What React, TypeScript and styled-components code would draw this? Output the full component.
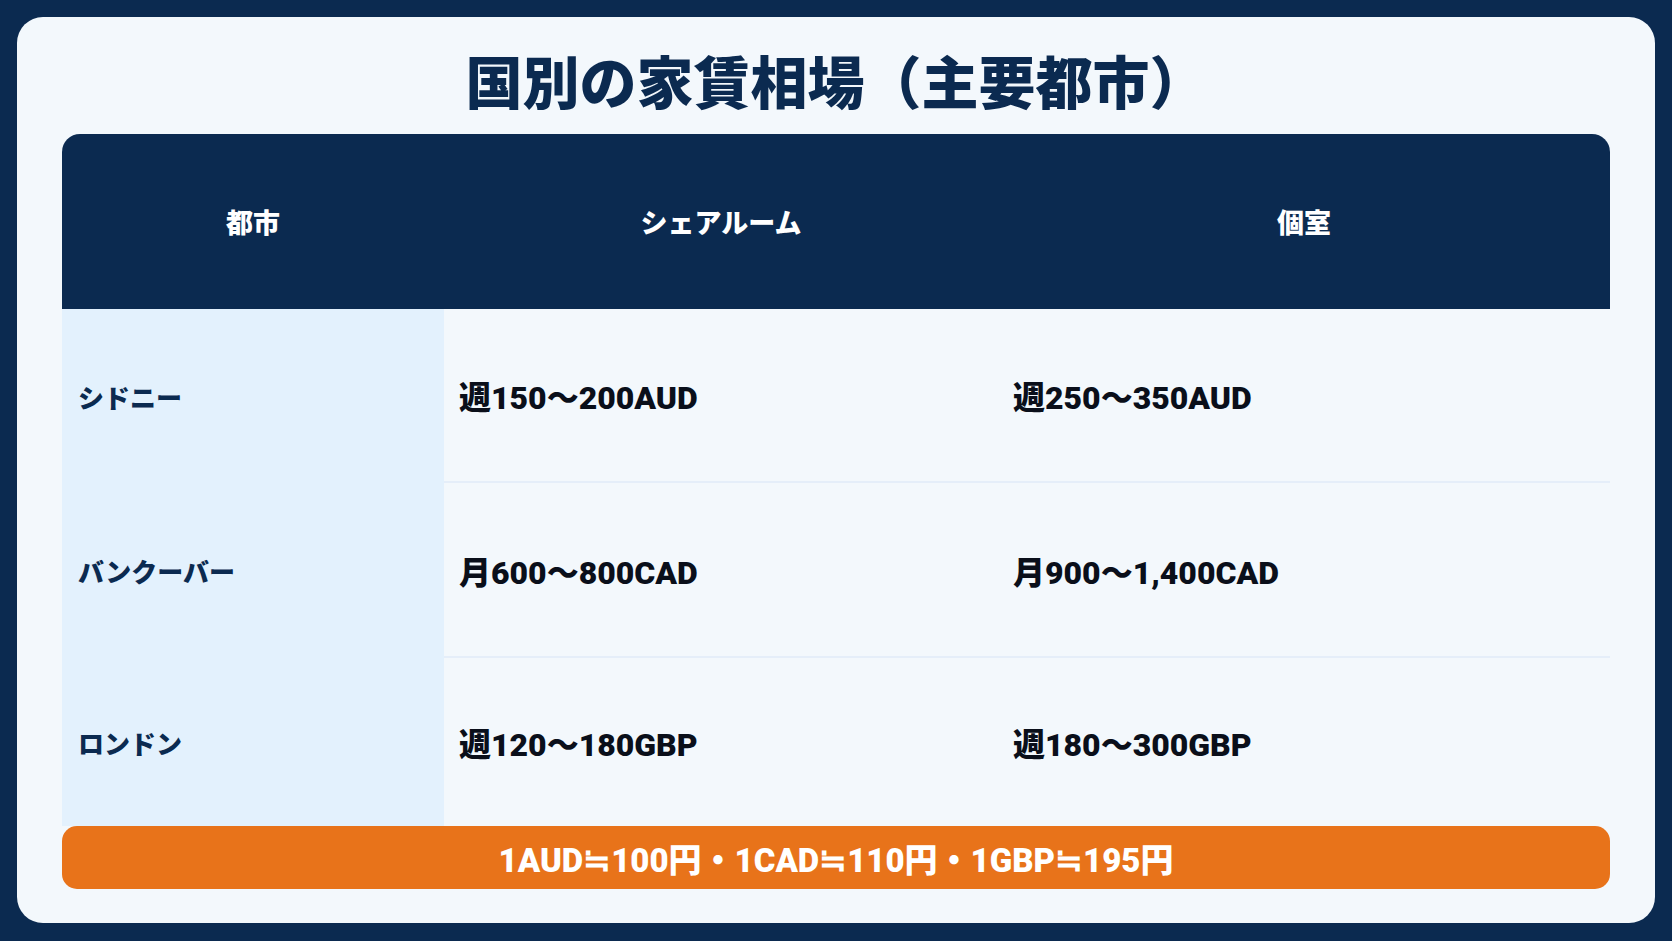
import React from 'react';
import styled, { createGlobalStyle } from 'styled-components';

const GlobalStyle = createGlobalStyle`
  html, body {
    margin: 0;
    padding: 0;
    background: #0b2a50;
  }
  body {
    font-family: "Noto Sans CJK JP", "Noto Sans", sans-serif;
  }
`;

const Page = styled.div`
  width: 1672px;
  height: 941px;
  box-sizing: border-box;
  padding: 17px 17px 18px;
  background: #0b2a50;
`;

const Card = styled.div`
  height: 100%;
  box-sizing: border-box;
  background: #f3f8fc;
  border-radius: 26px;
  padding: 0 45px;
  display: flex;
  flex-direction: column;
`;

const Title = styled.h1`
  margin: 0;
  height: 117px;
  box-sizing: border-box;
  padding-top: 6px;
  display: flex;
  align-items: center;
  justify-content: center;
  font-size: 57px;
  font-weight: 900;
  color: #0b2a50;
`;

const Table = styled.div`
  display: grid;
  grid-template-columns: 382px 554px 1fr;
  grid-template-rows: 175px 174px 175px 168px;
`;

const HeadCell = styled.div<{ first?: boolean; last?: boolean }>`
  background: #0b2a50;
  color: #ffffff;
  display: flex;
  align-items: center;
  justify-content: center;
  font-size: 27px;
  font-weight: 900;
  border-top-left-radius: ${({ first }) => (first ? '18px' : '0')};
  border-top-right-radius: ${({ last }) => (last ? '18px' : '0')};
`;

const CityCell = styled.div`
  background: #e3f1fd;
  color: #0b2a50;
  display: flex;
  align-items: center;
  padding-left: 16px;
  font-size: 26px;
  font-weight: 900;
`;

const ValueCell = styled.div<{ divider?: boolean }>`
  display: flex;
  align-items: center;
  padding-left: 15px;
  color: #0a0f1a;
  font-family: "Roboto", "Noto Sans CJK JP", sans-serif;
  font-size: 32px;
  font-weight: 900;
  border-bottom: ${({ divider }) => (divider ? '2px solid #e5eef9' : 'none')};
`;

const Footer = styled.div`
  height: 63px;
  background: #e8731a;
  border-radius: 15px;
  color: #ffffff;
  display: flex;
  align-items: center;
  justify-content: center;
  font-family: "Roboto", "Noto Sans CJK JP", sans-serif;
  font-size: 33px;
  font-weight: 900;
`;

const rows = [
  { city: 'シドニー', share: '週150〜200AUD', single: '週250〜350AUD' },
  { city: 'バンクーバー', share: '月600〜800CAD', single: '月900〜1,400CAD' },
  { city: 'ロンドン', share: '週120〜180GBP', single: '週180〜300GBP' },
];

const App: React.FC = () => (
  <>
    <GlobalStyle />
    <Page>
      <Card>
        <Title>国別の家賃相場（主要都市）</Title>
        <Table>
          <HeadCell first>都市</HeadCell>
          <HeadCell>シェアルーム</HeadCell>
          <HeadCell last>個室</HeadCell>
          {rows.map((r, i) => (
            <React.Fragment key={r.city}>
              <CityCell>{r.city}</CityCell>
              <ValueCell divider={i < rows.length - 1}>{r.share}</ValueCell>
              <ValueCell divider={i < rows.length - 1}>{r.single}</ValueCell>
            </React.Fragment>
          ))}
        </Table>
        <Footer>1AUD≒100円・1CAD≒110円・1GBP≒195円</Footer>
      </Card>
    </Page>
  </>
);

export default App;
